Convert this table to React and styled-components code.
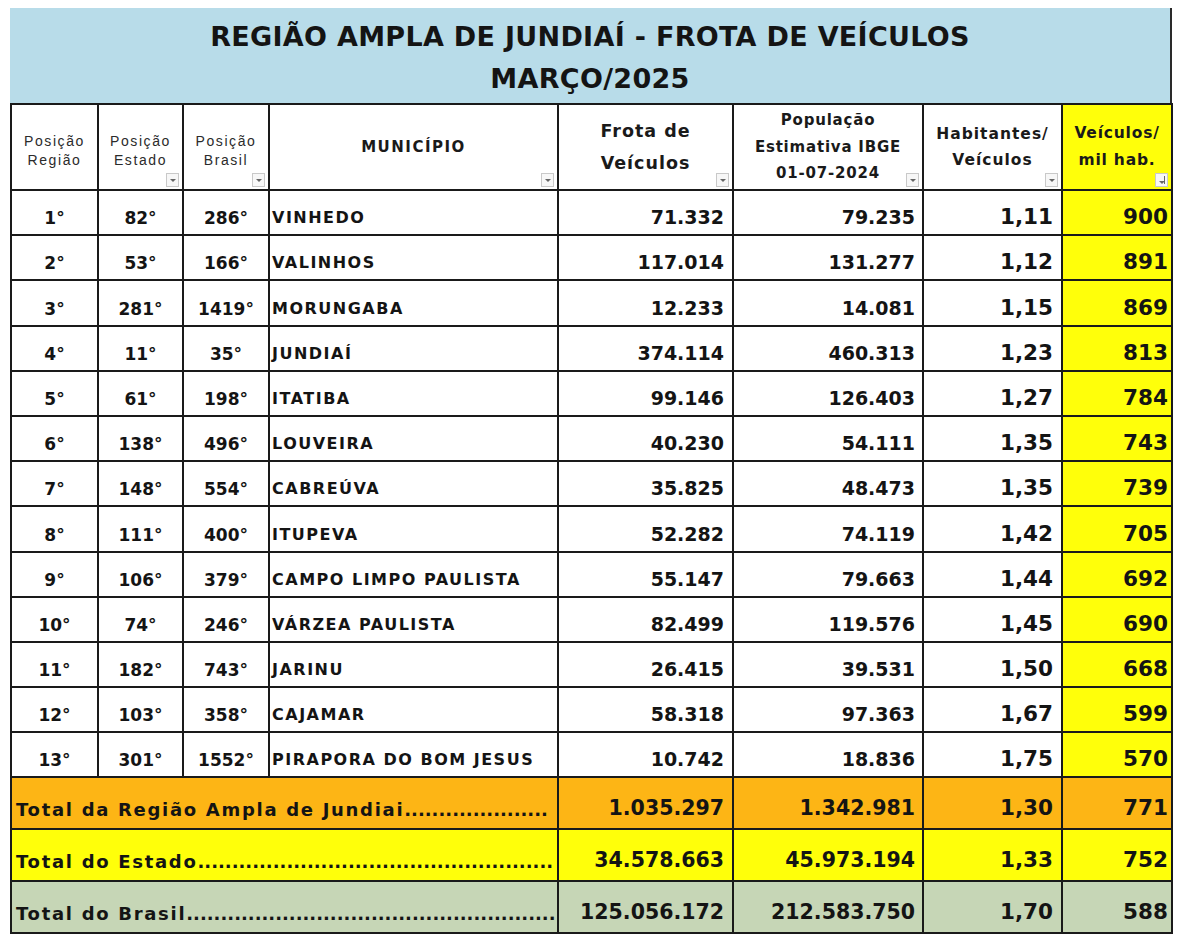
import React from "react";
import styled, { createGlobalStyle } from "styled-components";

const GlobalStyle = createGlobalStyle`
  body {
    margin: 0;
    background: #ffffff;
    font-family: "DejaVu Sans", "Liberation Sans", sans-serif;
    color: #111;
  }
`;

// data ------------
const rows = [
  ["1", "82", "286", "VINHEDO", "71.332", "79.235", "1,11", "900"],
  ["2", "53", "166", "VALINHOS", "117.014", "131.277", "1,12", "891"],
  ["3", "281", "1419", "MORUNGABA", "12.233", "14.081", "1,15", "869"],
  ["4", "11", "35", "JUNDIAÍ", "374.114", "460.313", "1,23", "813"],
  ["5", "61", "198", "ITATIBA", "99.146", "126.403", "1,27", "784"],
  ["6", "138", "496", "LOUVEIRA", "40.230", "54.111", "1,35", "743"],
  ["7", "148", "554", "CABREÚVA", "35.825", "48.473", "1,35", "739"],
  ["8", "111", "400", "ITUPEVA", "52.282", "74.119", "1,42", "705"],
  ["9", "106", "379", "CAMPO LIMPO PAULISTA", "55.147", "79.663", "1,44", "692"],
  ["10", "74", "246", "VÁRZEA PAULISTA", "82.499", "119.576", "1,45", "690"],
  ["11", "182", "743", "JARINU", "26.415", "39.531", "1,50", "668"],
  ["12", "103", "358", "CAJAMAR", "58.318", "97.363", "1,67", "599"],
  ["13", "301", "1552", "PIRAPORA DO BOM JESUS", "10.742", "18.836", "1,75", "570"],
];

const totals = [
  { label: "Total da Região Ampla de Jundiai", dots: 21, frota: "1.035.297", pop: "1.342.981", hab: "1,30", vei: "771", bg: "#fdb515" },
  { label: "Total do Estado", dots: 52, frota: "34.578.663", pop: "45.973.194", hab: "1,33", vei: "752", bg: "#ffff0a" },
  { label: "Total do Brasil", dots: 54, frota: "125.056.172", pop: "212.583.750", hab: "1,70", vei: "588", bg: "#c6d6b6" },
];

const widths = [87, 85, 86, 289, 175, 190, 139, 110];

function App() {
  return (
    <>
      <GlobalStyle />
      <Sheet>
        <TitleBox>
          <TitleLine>REGIÃO AMPLA DE JUNDIAÍ - FROTA DE VEÍCULOS</TitleLine>
          <TitleLine>MARÇO/2025</TitleLine>
        </TitleBox>
        <Table>
          <colgroup>
            {widths.map((w, i) => (
              <col key={i} style={{ width: w }} />
            ))}
          </colgroup>
          <thead>
            <HeadRow>
              <HeadCell>
                <SmallHead>Posição<br />Região</SmallHead>
              </HeadCell>
              <HeadCell>
                <SmallHead>Posição<br />Estado</SmallHead>
                <FilterBtn />
              </HeadCell>
              <HeadCell>
                <SmallHead>Posição<br />Brasil</SmallHead>
                <FilterBtn />
              </HeadCell>
              <HeadCell>
                <BoldHead $size={15} $line={20} $spacing={1.5}>MUNICÍPIO</BoldHead>
                <FilterBtn />
              </HeadCell>
              <HeadCell>
                <BoldHead $size={17.5} $line={32} $spacing={1}>Frota de<br />Veículos</BoldHead>
                <FilterBtn />
              </HeadCell>
              <HeadCell>
                <BoldHead $size={15} $line={26.5} $spacing={0.8}>
                  População<br />Estimativa IBGE<br />01-07-2024
                </BoldHead>
                <FilterBtn />
              </HeadCell>
              <HeadCell>
                <BoldHead $size={15.5} $line={26} $spacing={1}>Habitantes/<br />Veículos</BoldHead>
                <FilterBtn />
              </HeadCell>
              <HeadCell $yellow>
                <BoldHead $size={15.5} $line={27} $spacing={0.8}>Veículos/<br />mil hab.</BoldHead>
                <FilterBtn $sort />
              </HeadCell>
            </HeadRow>
          </thead>
          <tbody>
            {rows.map((r) => (
              <DataRow key={r[0]}>
                <PosCell>{r[0]}°</PosCell>
                <PosCell>{r[1]}°</PosCell>
                <PosCell>{r[2]}°</PosCell>
                <NameCell>{r[3]}</NameCell>
                <NumCell $pad={8}>{r[4]}</NumCell>
                <NumCell $pad={7}>{r[5]}</NumCell>
                <NumCell $pad={8} $big>{r[6]}</NumCell>
                <NumCell $pad={3} $big $bg="#ffff0a">{r[7]}</NumCell>
              </DataRow>
            ))}
            {totals.map((t) => (
              <TotalRow key={t.label} $bg={t.bg}>
                <LabelCell colSpan={4}>
                  {t.label}
                  <Dots>{".".repeat(t.dots)}</Dots>
                </LabelCell>
                <NumCell $pad={8} $total>{t.frota}</NumCell>
                <NumCell $pad={7} $total>{t.pop}</NumCell>
                <NumCell $pad={8} $big>{t.hab}</NumCell>
                <NumCell $pad={3} $big>{t.vei}</NumCell>
              </TotalRow>
            ))}
          </tbody>
        </Table>
      </Sheet>
    </>
  );
}

const Sheet = styled.div`
  width: 1162px;
  margin: 8px 0 0 10px;
`;

const TitleBox = styled.div`
  display: flex;
  flex-direction: column;
  align-items: center;
  justify-content: center;
  gap: 10px;
  height: 95px;
  padding-top: 5px;
  box-sizing: border-box;
  background-color: #b8dce9;
  border-right: 2px solid #2a2a2a;
`;

const TitleLine = styled.div`
  font-family: "DejaVu Sans", sans-serif;
  font-weight: bold;
  font-size: 27px;
  line-height: 32px;
  color: #141414;
  letter-spacing: 0.3px;
`;

const Table = styled.table`
  width: 1162px;
  table-layout: fixed;
  border-collapse: collapse;

  td,
  th {
    border: 2px solid #1a1a1a;
    padding: 0;
    white-space: nowrap;
  }
`;

const HeadRow = styled.tr`
  height: 86px;
`;

const HeadCell = styled.th`
  position: relative;
  vertical-align: middle;
  text-align: center;
  background-color: ${(p) => (p.$yellow ? "#ffff0a" : "#ffffff")};
`;

const SmallHead = styled.div`
  font-family: "Liberation Sans", Arial, sans-serif;
  font-weight: normal;
  font-size: 14px;
  line-height: 19px;
  letter-spacing: 1.6px;
  color: #2b2b2b;
  padding-top: 8px;
`;

const BoldHead = styled.div`
  font-family: "DejaVu Sans", sans-serif;
  font-weight: bold;
  font-size: ${(p) => p.$size}px;
  line-height: ${(p) => p.$line}px;
  letter-spacing: ${(p) => p.$spacing}px;
  color: #1a1a1a;
`;

const FilterBtn = styled.span`
  position: absolute;
  right: 3px;
  bottom: 2px;
  width: 13px;
  height: 14px;
  box-sizing: border-box;
  border: 1px solid #c9c9c9;
  background: #f7f7f7;

  &::after {
    content: "";
    position: absolute;
    left: 3px;
    top: ${(p) => (p.$sort ? "7px" : "5px")};
    border-left: 3px solid transparent;
    border-right: 3px solid transparent;
    border-top: 3px solid #666;
  }

  &::before {
    content: "";
    display: ${(p) => (p.$sort ? "block" : "none")};
    position: absolute;
    left: 8px;
    top: 2px;
    width: 1px;
    height: 8px;
    background: #666;
  }
`;

const DataRow = styled.tr`
  height: 45.2px;
`;

const PosCell = styled.td`
  vertical-align: bottom;
  text-align: center;
  padding-bottom: 6px !important;
  font-family: "DejaVu Sans", sans-serif;
  font-weight: bold;
  font-size: 17px;
  color: #141414;
`;

const NameCell = styled.td`
  vertical-align: bottom;
  text-align: left;
  padding: 0 0 7px 2px !important;
  font-family: "DejaVu Sans", sans-serif;
  font-weight: bold;
  font-size: 16px;
  letter-spacing: 1.5px;
  color: #141414;
`;

const NumCell = styled.td`
  vertical-align: bottom;
  text-align: right;
  padding: 0 ${(p) => p.$pad}px ${(p) => (p.$big ? 5 : 6)}px 0 !important;
  font-family: "DejaVu Sans", sans-serif;
  font-weight: bold;
  font-size: ${(p) => (p.$big ? 21.5 : p.$total ? 20.5 : 19)}px;
  color: #141414;
  background-color: ${(p) => p.$bg || "transparent"};
`;

const TotalRow = styled.tr`
  height: 52px;
  background-color: ${(p) => p.$bg};

  td {
    padding-bottom: 8px !important;
  }
`;

const LabelCell = styled.td`
  vertical-align: bottom;
  text-align: left;
  overflow: hidden;
  padding: 0 0 8px 4px !important;
  font-family: "DejaVu Sans", sans-serif;
  font-weight: bold;
  font-size: 18px;
  letter-spacing: 1.7px;
  color: #141414;
`;

const Dots = styled.span`
  letter-spacing: 0;
`;

export default App;
